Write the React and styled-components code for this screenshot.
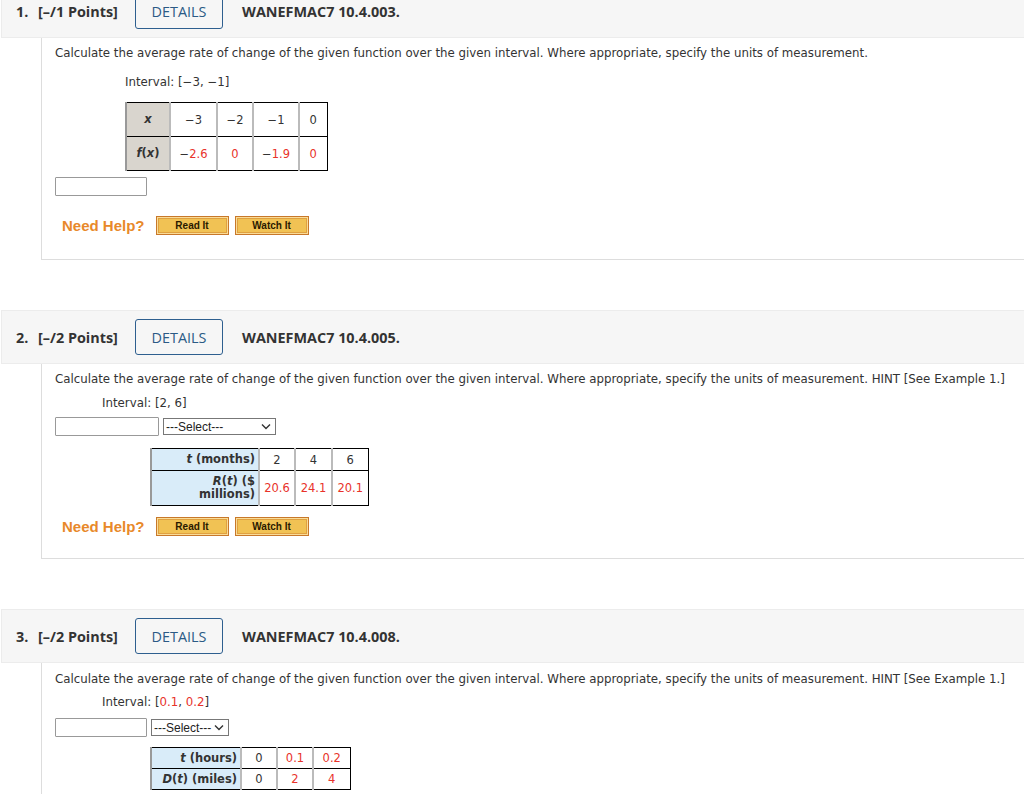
import styled, { createGlobalStyle } from "styled-components";

const Global = createGlobalStyle`
  body {
    margin: 0;
    background: #fff;
    font-family: "DejaVu Sans", Verdana, sans-serif;
    color: #333;
  }
`

const Page = styled.div`
  margin-top: -16px;
  width: 1024px;
`
const Question = styled.section`
  margin-bottom: 50px;
`
const Header = styled.header`
  display: flex;
  align-items: center;
  height: 52px;
  margin-left: 1px;
  padding-left: 14px;
  background: #f6f6f6;
  border: 1px solid #ececec;
  border-right: none;
  font-family: "Open Sans", sans-serif;
  font-size: 14.4px;
  color: #333;
`
const Num = styled.span`
  font-weight: 700;
  width: 22px;
`
const Points = styled.span`
  font-weight: 700;
  width: 97px;
`
const Details = styled.button`
  width: 88px;
  height: 36px;
  border: 1px solid #2e5f8f;
  border-radius: 3px;
  background: transparent;
  color: #2b5a85;
  font-family: "Open Sans", sans-serif;
  font-size: 14.4px;
  padding: 0;
  margin-right: 19px;
`
const Code = styled.span`
  font-weight: 700;
`
const Body = styled.div`
  margin-left: 41px;
  border-left: 1px solid #ddd;
  border-bottom: 1px solid #ddd;
  padding: ${p => p.$pad}px 0 0 13px;
  min-height: ${p => p.$h}px;
  box-sizing: border-box;
  font-size: 11.8px;
  line-height: 16px;
`
const Prompt = styled.p`
  margin: 0;
  color: #333;
`
const Interval = styled.p`
  margin: ${p => p.$top}px 0 0 ${p => p.$indent}px;
`
const Red = styled.span`
  color: #e8322a;
`
const Table = styled.table`
  border-collapse: collapse;
  margin: ${p => p.$top}px 0 0 ${p => p.$indent}px;
  font-size: 11.5px;
`
const Th = styled.th`
  background: ${p => p.$blue ? "#d9ecf9" : "#d9d5ce"};
  border: 1px solid #000;
  border-left: 2px solid #999;
  font-weight: 700;
  text-align: ${p => p.$blue ? "right" : "center"};
  padding: 0 ${p => p.$blue ? 3 : 8}px;
  height: ${p => p.$h}px;
  line-height: 13px;
  color: #333;
  width: ${p => p.$w}px;
  box-sizing: border-box;
`
const Td = styled.td`
  border: 1px solid #000;
  border-left: 2px solid #bbb;
  text-align: center;
  padding: 0 4px;
  height: ${p => p.$h}px;
  width: ${p => p.$w}px;
  box-sizing: border-box;
  color: ${p => p.$red ? "#e8322a" : "#333"};
`
const Row = styled.div`
  display: flex;
  align-items: center;
  gap: 4px;
  margin-top: ${p => p.$top}px;
`
const Input = styled.input`
  width: ${p => p.$w}px;
  height: 19px;
  box-sizing: border-box;
  border: 1px solid #999;
  border-radius: 1px;
  margin: 0;
`
const Select = styled.div`
  display: flex;
  align-items: center;
  justify-content: space-between;
  width: ${p => p.$w}px;
  height: 17px;
  box-sizing: border-box;
  border: 1px solid #777;
  padding: 0 4px 0 2px;
  font-family: "Liberation Sans", Arial, sans-serif;
  font-size: 12px;
  color: #222;
`
const Help = styled.div`
  display: flex;
  align-items: center;
  margin: ${p => p.$top}px 0 0 7px;
  gap: 6px;
`
const HelpLabel = styled.span`
  font-family: "Liberation Sans", Arial, sans-serif;
  font-weight: 700;
  font-size: 15px;
  color: #e8892a;
  margin-right: 5px;
`
const HelpButton = styled.button`
  width: ${p => p.$w}px;
  height: 19px;
  padding: 0;
  border: 1px solid #c8782a;
  box-shadow: inset 0 0 0 1px #f9dc98, inset 0 0 0 2px #e0a040;
  background: #f1c254;
  font-family: "Liberation Sans", Arial, sans-serif;
  font-weight: 700;
  font-size: 10px;
  color: #2a1a00;
`

const Chevron = () => (
  <svg width="10" height="7" viewBox="0 0 10 7">
    <path d="M1 1.5 L5 5.5 L9 1.5" fill="none" stroke="#333" strokeWidth="1.4" />
  </svg>
)

const PROMPT = "Calculate the average rate of change of the given function over the given interval. Where appropriate, specify the units of measurement."

function QHeader({ n, pts, code }) {
  return (
    <Header>
      <Num>{n}.</Num>
      <Points>[–/{pts} Points]</Points>
      <Details>DETAILS</Details>
      <Code>{code}</Code>
    </Header>
  )
}

function NeedHelp({ top }) {
  return (
    <Help $top={top}>
      <HelpLabel>Need Help?</HelpLabel>
      <HelpButton $w={73}>Read It</HelpButton>
      <HelpButton $w={74}>Watch It</HelpButton>
    </Help>
  )
}

export default function App() {
  return (
    <Page>
      <Global />
      <Question>
        <QHeader n={1} pts={1} code="WANEFMAC7 10.4.003." />
        <Body $h={222} $pad={7}>
          <Prompt>{PROMPT}</Prompt>
          <Interval $top={13} $indent={70}>Interval: [−3, −1]</Interval>
          <Table $top={12} $indent={70}>
            <tbody>
              <tr>
                <Th $h={34} $w={44}><i>x</i></Th>
                <Td $h={34} $w={47}>−3</Td>
                <Td $h={34} $w={36}>−2</Td>
                <Td $h={34} $w={46}>−1</Td>
                <Td $h={34} $w={28}>0</Td>
              </tr>
              <tr>
                <Th $h={34}><i>f</i>(<i>x</i>)</Th>
                <Td $h={34}>−<Red>2.6</Red></Td>
                <Td $h={34} $red>0</Td>
                <Td $h={34}>−<Red>1.9</Red></Td>
                <Td $h={34} $red>0</Td>
              </tr>
            </tbody>
          </Table>
          <Row $top={6}><Input $w={92} /></Row>
          <NeedHelp top={20} />
        </Body>
      </Question>
      <Question>
        <QHeader n={2} pts={2} code="WANEFMAC7 10.4.005." />
        <Body $h={195} $pad={7}>
          <Prompt>{PROMPT} HINT [See Example 1.]</Prompt>
          <Interval $top={8} $indent={47}>Interval: [2, 6]</Interval>
          <Row $top={6}>
            <Input $w={104} />
            <Select $w={113}>---Select--- <Chevron /></Select>
          </Row>
          <Table $top={12} $indent={95}>
            <tbody>
              <tr>
                <Th $blue $h={22} $w={108}><i>t</i> (months)</Th>
                <Td $h={22} $w={36}>2</Td>
                <Td $h={22} $w={37}>4</Td>
                <Td $h={22} $w={36}>6</Td>
              </tr>
              <tr>
                <Th $blue $h={35}><i>R</i>(<i>t</i>) ($<br />millions)</Th>
                <Td $h={35} $red>20.6</Td>
                <Td $h={35} $red>24.1</Td>
                <Td $h={35} $red>20.1</Td>
              </tr>
            </tbody>
          </Table>
          <NeedHelp top={11} />
        </Body>
      </Question>
      <Question>
        <QHeader n={3} pts={2} code="WANEFMAC7 10.4.008." />
        <Body $h={195} $pad={8}>
          <Prompt>{PROMPT} HINT [See Example 1.]</Prompt>
          <Interval $top={7} $indent={47}>Interval: [<Red>0.1</Red>, <Red>0.2</Red>]</Interval>
          <Row $top={8}>
            <Input $w={92} />
            <Select $w={78}>---Select--- <Chevron /></Select>
          </Row>
          <Table $top={10} $indent={95}>
            <tbody>
              <tr>
                <Th $blue $h={21} $w={90}><i>t</i> (hours)</Th>
                <Td $h={21} $w={36}>0</Td>
                <Td $h={21} $w={36} $red>0.1</Td>
                <Td $h={21} $w={37} $red>0.2</Td>
              </tr>
              <tr>
                <Th $blue $h={21}><i>D</i>(<i>t</i>) (miles)</Th>
                <Td $h={21}>0</Td>
                <Td $h={21} $red>2</Td>
                <Td $h={21} $red>4</Td>
              </tr>
            </tbody>
          </Table>
        </Body>
      </Question>
    </Page>
  )
}
